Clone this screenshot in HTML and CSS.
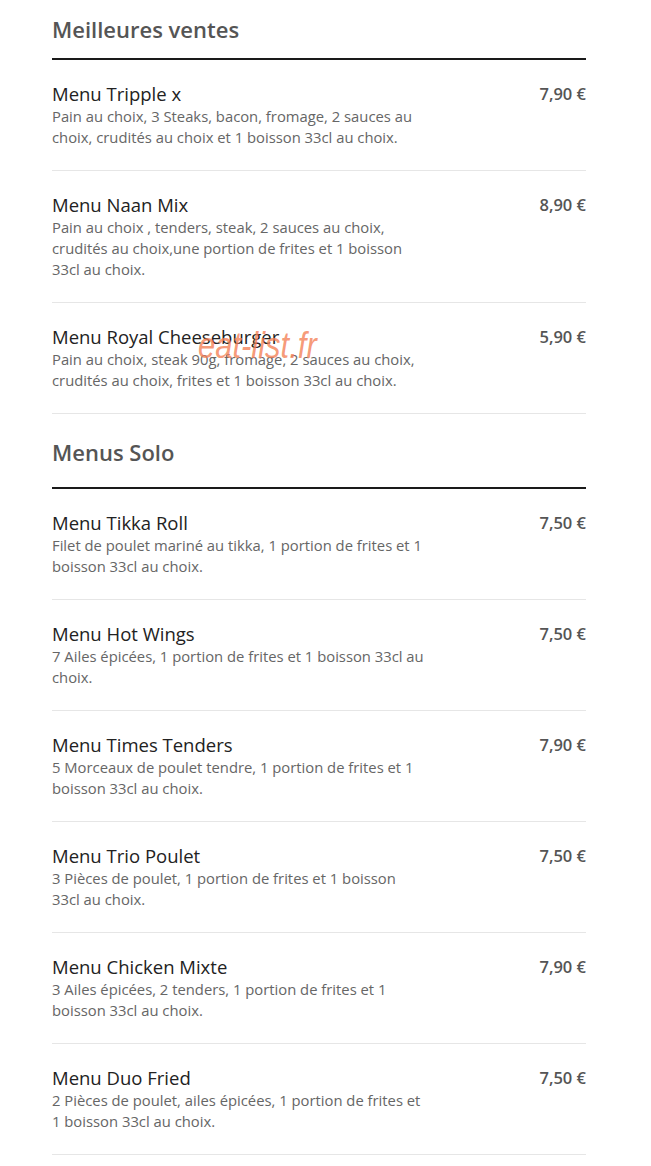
FILE: index.html
```html
<!DOCTYPE html>
<html lang="fr">
<head>
  <meta charset="UTF-8" />
  <title>Menus - eat-list.fr</title>
  <link rel="stylesheet" href="styles.css">
</head>
<body>

  <div class="carte">

    <div class="section">
      <h2>Meilleures ventes</h2>

      <div class="plat">
        <div class="plat-info">
          <h3>Menu Tripple x</h3>
          <p>Pain au choix, 3 Steaks, bacon, fromage, 2 sauces au choix, crudités au choix et 1 boisson 33cl au choix.</p>
        </div>
        <div class="prix">7,90 €</div>
      </div>

      <div class="plat">
        <div class="plat-info">
          <h3>Menu Naan Mix</h3>
          <p>Pain au choix , tenders, steak, 2 sauces au choix, crudités au choix,une portion de frites et 1 boisson 33cl au choix.</p>
        </div>
        <div class="prix">8,90 €</div>
      </div>

      <div class="plat">
        <div class="plat-info">
          <h3>Menu Royal Cheeseburger</h3>
          <p>Pain au choix, steak 90g, fromage, 2 sauces au choix, crudités au choix, frites et 1 boisson 33cl au choix.</p>
        </div>
        <div class="prix">5,90 €</div>
        <span class="filigrane">eat-list.fr</span>
      </div>
    </div>

    <div class="section">
      <h2>Menus Solo</h2>

      <div class="plat">
        <div class="plat-info">
          <h3>Menu Tikka Roll</h3>
          <p>Filet de poulet mariné au tikka, 1 portion de frites et 1 boisson 33cl au choix.</p>
        </div>
        <div class="prix">7,50 €</div>
      </div>

      <div class="plat">
        <div class="plat-info">
          <h3>Menu Hot Wings</h3>
          <p>7 Ailes épicées, 1 portion de frites et 1 boisson 33cl au choix.</p>
        </div>
        <div class="prix">7,50 €</div>
      </div>

      <div class="plat">
        <div class="plat-info">
          <h3>Menu Times Tenders</h3>
          <p>5 Morceaux de poulet tendre, 1 portion de frites et 1 boisson 33cl au choix.</p>
        </div>
        <div class="prix">7,90 €</div>
      </div>

      <div class="plat">
        <div class="plat-info">
          <h3>Menu Trio Poulet</h3>
          <p>3 Pièces de poulet, 1 portion de frites et 1 boisson 33cl au choix.</p>
        </div>
        <div class="prix">7,50 €</div>
      </div>

      <div class="plat">
        <div class="plat-info">
          <h3>Menu Chicken Mixte</h3>
          <p>3 Ailes épicées, 2 tenders, 1 portion de frites et 1 boisson 33cl au choix.</p>
        </div>
        <div class="prix">7,90 €</div>
      </div>

      <div class="plat">
        <div class="plat-info">
          <h3>Menu Duo Fried</h3>
          <p>2 Pièces de poulet, ailes épicées, 1 portion de frites et 1 boisson 33cl au choix.</p>
        </div>
        <div class="prix">7,50 €</div>
      </div>
    </div>

  </div>

</body>
</html>
```

FILE: styles.css
```css
body {
  font-family: 'Open Sans', 'Liberation Sans', sans-serif;
  background: #fff;
  margin: 0;
  padding: 0;
}

.carte {
  width: 534px;
  margin-left: 52px;
  padding-top: 14px;
}

.section h2 {
  margin: 0;
  padding: 0 0 14px;
  font-size: 22px;
  line-height: 30px;
  font-weight: 600;
  color: #555;
  border-bottom: 2px solid #1a1a1a;
}

.section + .section h2 {
  padding-top: 23px;
  padding-bottom: 20px;
}

.plat {
  position: relative;
  display: flex;
  justify-content: space-between;
  align-items: flex-start;
  padding: 22px 0;
  border-bottom: 1px solid #e6e6e6;
}

.plat-info {
  width: 373px;
}

.plat h3 {
  margin: 0;
  font-size: 18.5px;
  line-height: 24px;
  font-weight: 500;
  color: #222;
}

.plat p {
  margin: 0;
  font-size: 14.8px;
  line-height: 21px;
  color: #666;
}

.prix {
  font-size: 16.5px;
  line-height: 24px;
  font-weight: 600;
  color: #555;
}

.filigrane {
  position: absolute;
  left: 146px;
  top: 25px;
  font-family: 'Liberation Sans', sans-serif;
  font-size: 36px;
  line-height: 36px;
  font-style: italic;
  color: rgba(244, 128, 86, 0.8);
  transform: scaleX(0.86);
  transform-origin: left center;
  pointer-events: none;
}
```
